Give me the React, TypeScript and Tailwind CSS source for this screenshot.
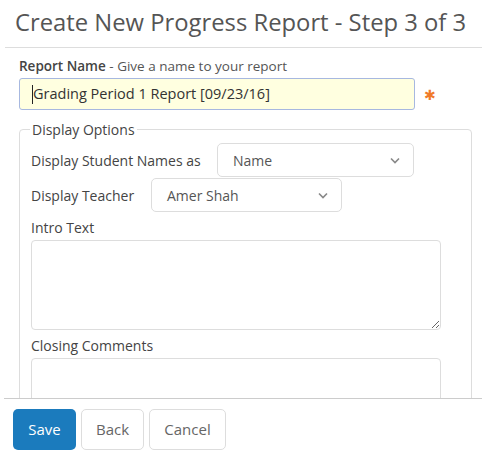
import React from "react";

function Chevron() {
  return (
    <svg width="10" height="7" viewBox="0 0 10 7" className="text-[#888]">
      <path d="M1 1.5 L5 5.5 L9 1.5" fill="none" stroke="currentColor" strokeWidth="1.6" />
    </svg>
  );
}

function SelectBox({ value, width }: { value: string; width: string }) {
  return (
    <div
      className={`flex h-[34px] items-center justify-between rounded-[5px] border border-[#ddd] bg-white pl-[15px] pr-[13px] text-[14px] text-[#555] ${width}`}
    >
      <span>{value}</span>
      <Chevron />
    </div>
  );
}

export default function App() {
  return (
    <div
      className="relative h-[459px] w-[482px] overflow-hidden bg-white text-[#333]"
      style={{ fontFamily: '"Open Sans", sans-serif' }}
    >
      {/* Header */}
      <div className="ml-[5px] border-b border-[#ddd] pb-[9px] pl-[10px] pt-[6px]">
        <h1 className="whitespace-nowrap text-[23.8px] font-normal leading-[32px] text-[#555]">
          Create New Progress Report - Step 3 of 3
        </h1>
      </div>

      {/* Body */}
      <div className="pl-[19px] pr-[11px] pt-[9px]">
        <p className="text-[13.5px] leading-[18px] text-[#555]">
          <span className="font-semibold text-[#444]">Report Name</span> - Give a name to your report
        </p>
        <div className="mt-[3px] flex items-center">
          <div className="flex h-[32px] w-[396px] items-center rounded-[3px] border border-[#a7b8e0] bg-[#ffffe0] pl-[12px] text-[14.5px] text-[#333]">
            <span className="h-[19px] w-px bg-[#222]" />
            <span>Grading Period 1 Report [09/23/16]</span>
          </div>
          <span className="ml-[9px] mt-[2px] text-[14px] leading-none text-[#f07a2a]">✱</span>
        </div>

        <fieldset className="mt-[9px] h-[400px] w-[453px] rounded-[4px] border border-[#ddd] pl-[11px] pr-[30px]">
          <legend className="ml-[-1px] px-[2px] text-[14px] text-[#444]">Display Options</legend>

          <div className="mt-[3px] flex items-center">
            <span className="w-[186px] text-[14px] text-[#444]">Display Student Names as</span>
            <SelectBox value="Name" width="w-[197px]" />
          </div>
          <div className="mt-[1px] flex items-center">
            <span className="w-[120px] text-[14px] text-[#444]">Display Teacher</span>
            <SelectBox value="Amer Shah" width="w-[191px]" />
          </div>

          <p className="mt-[6px] text-[14px] leading-[20px] text-[#444]">Intro Text</p>
          <textarea
            className="mt-[2px] block h-[90px] w-[410px] rounded-[4px] border border-[#ddd] bg-white"
            readOnly
          />

          <p className="mt-[6px] text-[14px] leading-[20px] text-[#444]">Closing Comments</p>
          <textarea
            className="mt-[2px] block h-[90px] w-[410px] rounded-[4px] border border-[#ddd] bg-white"
            readOnly
          />
        </fieldset>
      </div>

      {/* Footer */}
      <div className="absolute bottom-0 left-[4px] right-0 flex h-[61px] gap-[5px] border-t border-[#ccc] bg-white pl-[9px] pt-[10px]">
        <button className="h-[41px] w-[63px] rounded-[5px] bg-[#1b7bbd] text-[15px] text-white">Save</button>
        <button className="h-[41px] w-[63px] rounded-[5px] border border-[#ddd] bg-white text-[15px] text-[#666]">
          Back
        </button>
        <button className="h-[41px] w-[77px] rounded-[5px] border border-[#ddd] bg-white text-[15px] text-[#666]">
          Cancel
        </button>
      </div>
    </div>
  );
}
